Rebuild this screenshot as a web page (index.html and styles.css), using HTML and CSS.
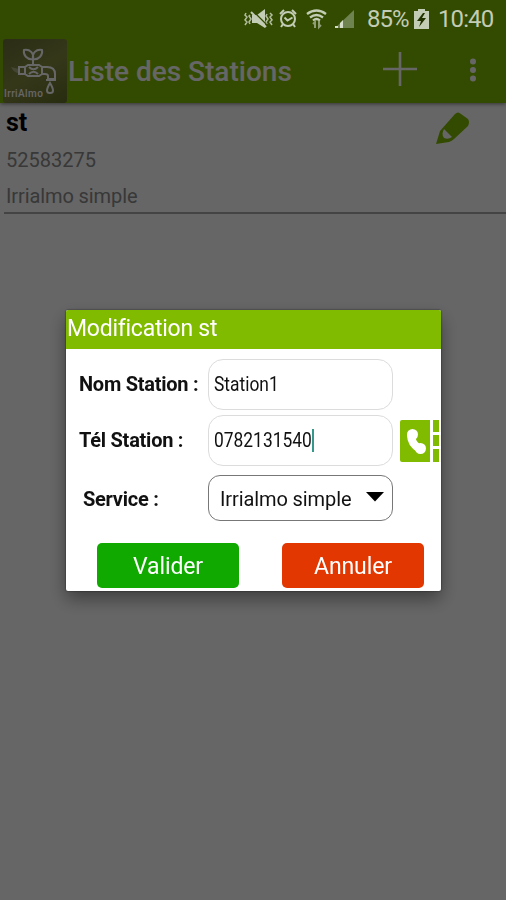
FILE: index.html
```
<!DOCTYPE html>
<html lang="fr">
<head>
    <meta charset="UTF-8">
    <meta name="viewport" content="width=device-width, initial-scale=1.0">
    <title>Liste des Stations</title>
    <link rel="stylesheet" href="styles.css">
</head>
<body>
    <div class="status-bar">
        <svg class="status-icons" width="116" height="24" viewBox="0 0 116 24">
            <!-- vibreur -->
            <g fill="none" stroke="#b3be9f" stroke-width="1.5">
                <path d="M4 6l-1 2 2 2-2 3 2 2-2 3M8 8l-1 1 2 3-2 3 1 2M25 7l-1 2 2 3-2 3 1 2M28 6l2 2-2 2 2 3-2 2 2 3"/>
            </g>
            <path d="M10 8h5l8-6v19l-8-5h-5z" fill="#c3ccb5"/>
            <path d="M11 4l14 14" stroke="#334b00" stroke-width="1.2"/>
            <path d="M9 5l15 15" stroke="#c3ccb5" stroke-width="2"/>
            <!-- alarme -->
            <g fill="none" stroke="#c3ccb5" stroke-width="2">
                <circle cx="46" cy="12" r="7"/>
                <path d="M38 7l4-4M54 7l-4-4M41 17l-2 3M51 17l2 3M42.500 10.500l3 3 5-3"/>
            </g>
            <!-- wifi -->
            <g fill="none" stroke="#c3ccb5" stroke-width="2.300">
                <path d="M65 7q9.500-7 19 0M68 10.500q6.500-5 13 0M71 13.500q3.500-3 7 0"/>
            </g>
            <path d="M73 21v-6l-2 2M77 14v6l2-2" fill="none" stroke="#8f9d74" stroke-width="2"/>
            <!-- réseau -->
            <path d="M93 21L112 3v18z" fill="#6f8350"/>
            <path d="M93 21v-2h3v2zM98 21v-5l3-3v8z" fill="#d5dcca"/>
        </svg>
        <span class="battery-level">85%</span>
        <svg class="battery" width="15" height="20" viewBox="0 0 15 20">
            <path d="M4 0h7v2h4v18H0V2h4z" fill="#c3ccb5"/>
            <path d="M9 4L3 12h4l-2 6 7-9H8l3-5z" fill="#223300"/>
        </svg>
        <span class="clock">10:40</span>
    </div>

    <div class="app-bar">
        <div class="logo">
            <svg width="64" height="64" viewBox="0 0 64 64">
                <g fill="none" stroke="#fff" stroke-width="2">
                    <path d="M30 27v-7M30 20c-6 1-10-4-9-9 6-1 10 3 9 9zM30 20c6 1 10-4 9-9-6-1-10 3-9 9z"/>
                    <path d="M16 28h6v7h-6zM22 28l3-2h11l3 2v7l-3 2H25l-3-2zM26 28c3 3 6 3 9 0M26 35c3-3 6-3 9 0"/>
                    <path d="M39 28h5q8 0 8 7v5h-7v-3q0-2-3-2h-3M43 41h10"/>
                    <path d="M47 44q-6 10 0 10t0-10z"/>
                </g>
                <path d="M8 28l8 2v4q-5 0-8-6z" fill="#fff" opacity="0.35"/>
            </svg>
            <span class="logo-name">IrriAlmo</span>
        </div>
        <h1 class="app-title">Liste des Stations</h1>
        <svg class="add" width="34" height="34" viewBox="0 0 34 34">
            <path d="M17 0v34M0 17h34" stroke="#fff" stroke-width="2.600"/>
        </svg>
        <svg class="more" width="8" height="24" viewBox="0 0 8 24">
            <g fill="#fff">
                <circle cx="4" cy="3.500" r="3"/>
                <circle cx="4" cy="12" r="3"/>
                <circle cx="4" cy="20.500" r="3"/>
            </g>
        </svg>
    </div>

    <div class="station">
        <div class="station-info">
            <div class="station-name">st</div>
            <div class="station-phone">52583275</div>
            <div class="station-service">Irrialmo simple</div>
        </div>
        <svg class="edit" width="34" height="34" viewBox="0 0 34 34">
            <path d="M0 33L4 20 19 3q3-3 6 0l7 5q2 3 0 7L18 28q-2 2-5 3z" fill="#80bb00"/>
            <path d="M8 18l8 8q-4 3-8 1-3-3 0-9z" fill="#fff"/>
        </svg>
    </div>

    <div class="overlay">
        <div class="dialog">
            <div class="dialog-title">Modification st</div>
            <div class="field">
                <label class="label" for="nom">Nom Station :</label>
                <div class="input" id="nom"><span class="value">Station1</span></div>
            </div>
            <div class="field">
                <label class="label" for="tel">Tél Station :</label>
                <div class="input" id="tel"><span class="value value-tel">0782131540</span><span class="caret"></span></div>
                <svg class="contacts" width="39" height="42" viewBox="0 0 39 42">
                    <path d="M2 0h28v42H2q-2 0-2-2V2q0-2 2-2zM33 0h6v12h-6zM33 15h6v11h-6zM33 29h6v13h-6z" fill="#80bb00"/>
                    <path d="M11 15q0 9 9 14" fill="none" stroke="#fff" stroke-width="8"/>
                    <circle cx="12.500" cy="14.500" r="5.500" fill="#fff"/>
                    <circle cx="20.500" cy="28.500" r="5.500" fill="#fff"/>
                </svg>
            </div>
            <div class="field field-service">
                <label class="label" for="service">Service :</label>
                <div class="select" id="service">
                    <span>Irrialmo simple</span>
                    <svg width="18" height="10" viewBox="0 0 18 10"><path d="M0 0h18L9 9.500z" fill="#000"/></svg>
                </div>
            </div>
            <div class="buttons">
                <button class="button button-ok">Valider</button>
                <button class="button button-cancel">Annuler</button>
            </div>
        </div>
    </div>
</body>
</html>
```
FILE: styles.css
```
* {
    box-sizing: border-box;
}
body {
    margin: 0;
    width: 506px;
    height: 900px;
    overflow: hidden;
    background: #fff;
    font-family: Roboto, sans-serif;
}
svg {
    display: block;
    flex: none;
}
.status-bar {
    position: relative;
    z-index: 2;
    display: flex;
    align-items: center;
    height: 38px;
    padding-left: 242px;
    background: #334b00;
    color: #c3ccb5;
    font-size: 24px;
    line-height: 36px;
    white-space: nowrap;
}
.status-icons,
.battery {
    margin-bottom: 1px;
}
.battery-level {
    width: 43px;
    margin-left: 9px;
    letter-spacing: -1px;
}
.battery {
    margin-left: 4px;
}
.clock {
    margin-left: 9px;
    letter-spacing: -0.9px;
}
.app-bar {
    display: flex;
    align-items: center;
    height: 65px;
    padding-left: 3px;
    background: #80bb00;
    color: #fff;
    box-shadow: 0 1px 4px rgba(0, 0, 0, 0.5);
}
.logo {
    display: flex;
    flex-direction: column;
    flex: none;
    width: 64px;
    height: 64px;
    background: linear-gradient(150deg, #6b7038, #858b40 50%, #657029);
    border-radius: 3px;
}
.logo-name {
    margin: -15px 0 0 1px;
    font-size: 10px;
    font-weight: 500;
    line-height: 12px;
    letter-spacing: 0.4px;
}
.app-title {
    width: 225px;
    margin: 2px 0 0 1px;
    font-size: 28px;
    font-weight: 500;
    line-height: 34px;
    white-space: nowrap;
}
.add {
    margin: -3px 0 0 90px;
}
.more {
    margin: -2px 0 0 52px;
}
.station {
    display: flex;
    height: 111px;
    margin-left: 4px;
    padding-left: 2px;
    border-bottom: 2px solid #aaa;
}
.station-info {
    width: 430px;
    padding-top: 1px;
}
.station-name {
    height: 37px;
    color: #000;
    font-size: 25px;
    font-weight: 700;
    line-height: 37px;
}
.station-phone,
.station-service {
    height: 37px;
    color: #8c8c8c;
    font-size: 20px;
    line-height: 38px;
}
.station-service {
    line-height: 36px;
    letter-spacing: -0.1px;
}
.edit {
    margin-top: 8px;
}
.overlay {
    position: fixed;
    inset: 0;
    z-index: 1;
    padding: 310px 0 0 66px;
    background: rgba(0, 0, 0, 0.6);
}
.dialog {
    width: 375px;
    height: 281px;
    border-radius: 2px;
    background: #fff;
    color: #111;
    box-shadow: 0 0 2px rgba(0, 0, 0, 0.7), 0 8px 18px rgba(0, 0, 0, 0.4);
}
.dialog-title {
    height: 39px;
    margin-bottom: 10px;
    padding-left: 1px;
    border-radius: 2px 2px 0 0;
    background: #80bb00;
    color: #fff;
    font-size: 23px;
    line-height: 37px;
    letter-spacing: -0.25px;
}
.field {
    display: flex;
    align-items: center;
    height: 51px;
    margin-bottom: 5px;
    white-space: nowrap;
}
.label {
    width: 142px;
    padding: 0 0 1px 13px;
    font-size: 20px;
    font-weight: 700;
    letter-spacing: -0.25px;
}
.input,
.select {
    display: flex;
    align-items: center;
    width: 185px;
    height: 51px;
    padding: 0 0 1px 5px;
    border: 1px solid #dcdcdc;
    border-radius: 15px;
    font-size: 20px;
}
/* texte condensé des champs de saisie */
.value {
    transform: scaleX(0.87);
    transform-origin: left;
}
.value-tel {
    width: 98px;
}
.caret {
    width: 2px;
    height: 23px;
    background: #36978b;
}
.contacts {
    margin-left: 7px;
}
.field-service {
    height: 46px;
    margin: 9px 0 22px;
}
.field-service .label {
    padding: 1px 0 0 17px;
}
.select {
    justify-content: space-between;
    height: 46px;
    padding: 2px 8px 0 11px;
    border-color: #777;
    border-radius: 12px;
    letter-spacing: -0.1px;
}
.select svg {
    margin-bottom: 4px;
}
.buttons {
    display: flex;
    gap: 43px;
    padding-left: 31px;
}
.button {
    width: 142px;
    height: 45px;
    padding: 1px 0 0;
    border: none;
    border-radius: 5px;
    color: #fff;
    font-family: inherit;
    font-size: 23px;
    letter-spacing: -0.1px;
}
.button-ok {
    background: #10a900;
}
.button-cancel {
    background: #e23700;
}
```
